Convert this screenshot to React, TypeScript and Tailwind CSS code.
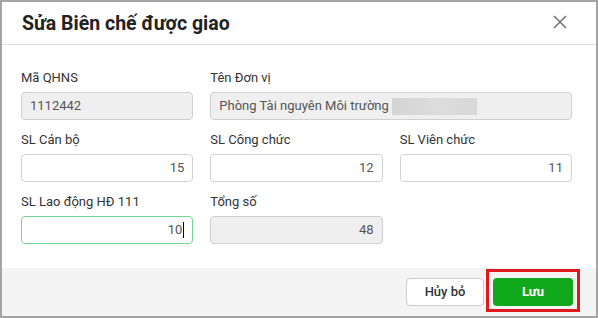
import React from "react";

const Label = ({ children }: { children: React.ReactNode }) => (
  <div className="h-[16px] leading-[16px] text-[13px] text-[#333333] mb-[6px]">{children}</div>
);

const Field = ({
  label,
  value,
  disabled,
  focused,
  left,
  children,
}: {
  label: string;
  value?: string;
  disabled?: boolean;
  focused?: boolean;
  left?: boolean;
  children?: React.ReactNode;
}) => (
  <div className="flex flex-col">
    <Label>{label}</Label>
    <div
      className={
        "h-[28px] rounded-[4px] border flex items-center text-[13px] text-[#555555] px-[8px] " +
        (disabled
          ? "bg-[#efefef] border-[#d0d0d0] "
          : focused
          ? "bg-white border-[#74d693] "
          : "bg-white border-[#d0d0d0] ") +
        (left ? "justify-start" : "justify-end")
      }
    >
      {children ?? value}
    </div>
  </div>
);

export default function App() {
  return (
    <div className="w-[598px] h-[318px] border-2 border-[#a4a4a4] bg-white flex flex-col font-['Roboto',sans-serif]">
      <div className="h-[43px] shrink-0 flex items-center justify-between pl-[20px] pr-[29px] border-b border-[#dedede]">
        <div className="text-[19.5px] font-bold text-[#222222] leading-none pt-[1px]">Sửa Biên chế được giao</div>
        <svg width="14" height="14" viewBox="0 0 14 14" className="mt-[-2px]">
          <path d="M1 1L13 13M13 1L1 13" stroke="#707070" strokeWidth="1.5" />
        </svg>
      </div>
      <div className="flex-1 pl-[19px] pt-[25px]">
        <div className="w-[551px] grid grid-cols-3 gap-x-[17px] gap-y-[12px]">
          <Field label="Mã QHNS" value="1112442" disabled left />
          <div className="col-span-2">
            <Field label="Tên Đơn vị" disabled left>
              <span className="whitespace-nowrap">Phòng Tài nguyên Môi trường</span>
              <span className="ml-[3px] w-[85px] h-[17px] bg-gradient-to-r from-[#d4d4d4] via-[#dcdcdc] to-[#d8d8d8]" />
            </Field>
          </div>
          <Field label="SL Cán bộ" value="15" />
          <Field label="SL Công chức" value="12" />
          <Field label="SL Viên chức" value="11" />
          <Field label="SL Lao động HĐ 111" focused>
            <span>10</span>
            <span className="ml-[1px] w-px h-[16px] bg-black" />
          </Field>
          <Field label="Tổng số" value="48" disabled />
        </div>
      </div>
      <div className="h-[48px] shrink-0 bg-[#f4f4f4] flex items-center justify-end gap-[9px] pr-[23px]">
        <button className="w-[78px] h-[28px] rounded-[4px] border border-[#cccccc] bg-white text-[13px] text-[#333333] font-medium">
          Hủy bỏ
        </button>
        <div className="relative">
          <button className="w-[80px] h-[28px] rounded-[4px] bg-[#12a81b] text-[13px] text-white font-bold">
            Lưu
          </button>
          <div className="absolute left-[-7px] top-[-9px] w-[94px] h-[43px] border-[3px] border-[#e0191f] pointer-events-none" />
        </div>
      </div>
    </div>
  );
}
